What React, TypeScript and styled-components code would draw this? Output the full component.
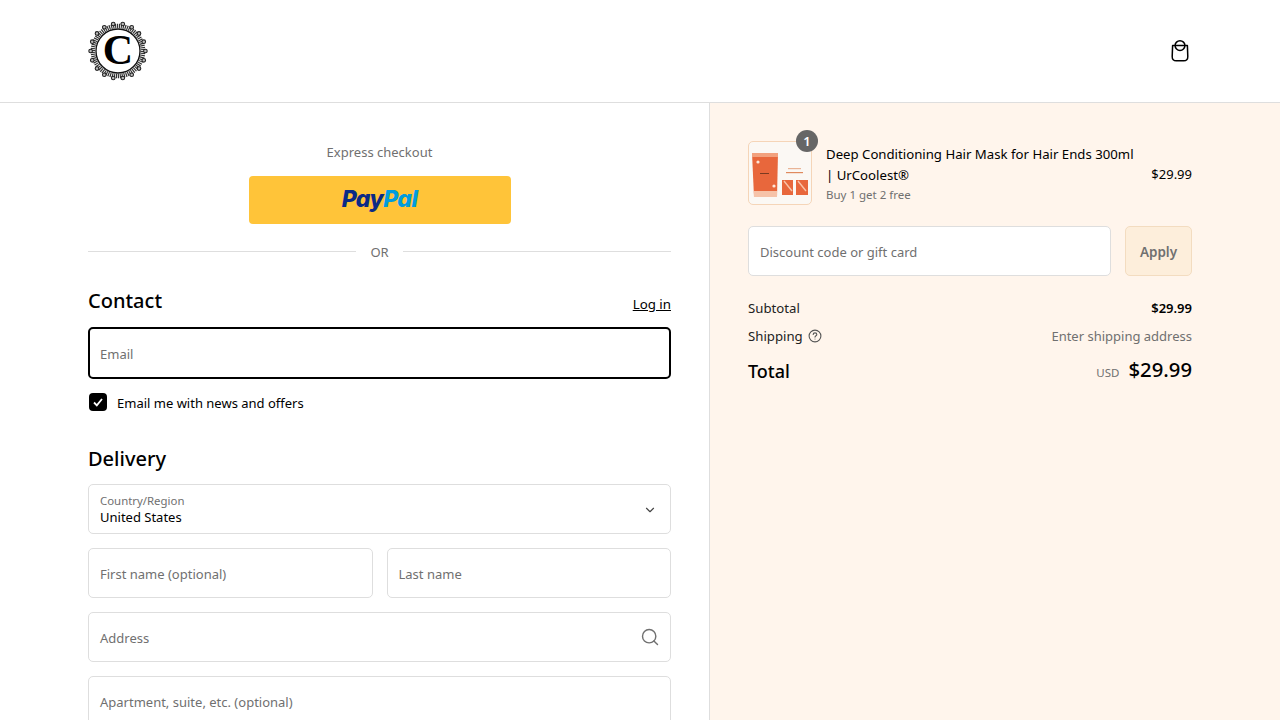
import React from 'react'
import styled, { createGlobalStyle } from 'styled-components'
import { ChevronDown, Search } from 'lucide-react'

const GlobalStyle = createGlobalStyle`
  html, body {
    height: 100%;
    margin: 0;
    overflow: hidden;
  }
  body {
    background: #fff;
    color: #000;
    font-family: "Noto Sans", "Open Sans", sans-serif;
    font-size: 13px;
  }
  * {
    box-sizing: border-box;
  }
`

const Header = styled.header`
  align-items: center;
  border-bottom: 1px solid #dedede;
  display: flex;
  height: 103px;
  justify-content: space-between;
  padding: 0 88px;
`

const CartLink = styled.a`
  color: #000;
  display: flex;
`

const Main = styled.div`
  display: grid;
  grid-template-columns: 710px 1fr;
  height: 617px;
  overflow: hidden;
`

const CheckoutColumn = styled.main`
  border-right: 1px solid #dedede;
  padding: 38px 38px 0 88px;
`

const ExpressLabel = styled.div`
  color: #707070;
  font-size: 13px;
  line-height: 22px;
  text-align: center;
`

const PayPalButton = styled.button`
  align-items: center;
  background: #ffc439;
  border: 0;
  border-radius: 4px;
  display: flex;
  font-family: Inter, "Liberation Sans", sans-serif;
  font-size: 23px;
  font-style: italic;
  font-weight: 800;
  height: 48px;
  justify-content: center;
  letter-spacing: -0.6px;
  margin: 13px auto 0;
  padding: 0 0 3px;
  width: 262px;
`

const PayPart = styled.span<{ $light?: boolean }>`
  color: ${({ $light }) => ($light ? '#009cde' : '#0b2a86')};
`

const Divider = styled.div`
  align-items: center;
  color: #707070;
  display: flex;
  font-size: 13px;
  gap: 14px;
  line-height: 20px;
  margin-top: 18px;

  &::before,
  &::after {
    background: #dedede;
    content: '';
    flex: 1;
    height: 1px;
    margin-top: -1px;
  }
`

const SectionHead = styled.div`
  align-items: flex-end;
  display: flex;
  justify-content: space-between;
`

const SectionTitle = styled.h2<{ $top: number }>`
  font-size: 20px;
  font-weight: 500;
  line-height: 28px;
  margin: ${({ $top }) => $top}px 0 0;
`

const LogIn = styled.a`
  color: #000;
  font-size: 13.3px;
  line-height: 20px;
  margin-bottom: 1px;
  text-decoration: underline;
`

const Field = styled.div<{ $focused?: boolean; $top?: number }>`
  align-items: center;
  background: #fff;
  border: ${({ $focused }) => ($focused ? '2px solid #000' : '1px solid #dedede')};
  border-radius: 5px;
  color: #707070;
  display: flex;
  flex: 1;
  font-size: 13px;
  height: ${({ $focused }) => ($focused ? '52px' : '50px')};
  justify-content: space-between;
  margin-top: ${({ $top }) => $top ?? 0}px;
  padding: 1px ${({ $focused }) => ($focused ? '10px' : '11px')} 0;
`

const SelectText = styled.div`
  display: flex;
  flex-direction: column;
  margin-top: -1px;
`

const SelectLabel = styled.span`
  color: #707070;
  font-size: 11.4px;
  line-height: 16px;
`

const SelectValue = styled.span`
  color: #000;
  font-size: 13px;
  line-height: 17px;
`

const SelectChevron = styled(ChevronDown)`
  margin-right: 2px;
  margin-top: 1px;
`

const SearchGlyph = styled(Search)`
  margin-right: -1px;
  margin-top: -1px;
`

const FieldRow = styled.div`
  display: flex;
  gap: 14px;
  margin-top: 14px;
`

const CheckRow = styled.label`
  align-items: center;
  display: flex;
  gap: 10px;
  line-height: 20px;
  margin-top: 12px;
  padding-left: 1px;
`

const CheckText = styled.span`
  padding-top: 2px;
`

const CheckBox = styled.span`
  align-items: center;
  background: #000;
  border-radius: 4px;
  color: #fff;
  display: flex;
  height: 18px;
  justify-content: center;
  width: 18px;
`

const SummaryColumn = styled.aside`
  background: #fff5ec;
  padding: 38px 88px 0 38px;
`

const Product = styled.div`
  align-items: center;
  display: flex;
  gap: 14px;
`

const Thumb = styled.div`
  background: #fbf8f4;
  border: 1px solid #f5d5b8;
  border-radius: 5px;
  flex: none;
  height: 64px;
  position: relative;
  width: 64px;
`

const Badge = styled.span`
  align-items: center;
  background: #666;
  border-radius: 50%;
  color: #fff;
  display: flex;
  font-size: 13px;
  font-weight: 600;
  height: 22px;
  justify-content: center;
  position: absolute;
  right: -7px;
  top: -12px;
  width: 22px;
`

const ProductInfo = styled.div`
  flex: 1;
`

const ProductName = styled.div`
  font-size: 13.2px;
  line-height: 21px;
  padding-top: 1px;
`

const ProductNote = styled.div`
  color: #707070;
  font-size: 11.5px;
  line-height: 18px;
`

const Price = styled.span`
  font-size: 13px;
  padding-top: 2px;
`

const DiscountRow = styled.div`
  display: flex;
  gap: 14px;
  margin-top: 21px;
`

const ApplyButton = styled.button`
  background: #fdeedb;
  border: 1px solid #f3dcc0;
  border-radius: 5px;
  color: #707070;
  font-family: inherit;
  font-size: 13.5px;
  font-weight: 600;
  height: 50px;
  padding: 2px 0 0;
  width: 67px;
`

const Totals = styled.div`
  margin-top: 22px;
`

const TotalRow = styled.div<{ $top?: number }>`
  align-items: center;
  display: flex;
  justify-content: space-between;
  line-height: 20px;
  margin-top: ${({ $top }) => $top ?? 0}px;
`

const RowLabel = styled.span`
  align-items: center;
  color: #222;
  display: flex;
  font-size: 13.2px;
  gap: 5px;
`

const Strong = styled.span`
  font-weight: 600;
`

const Muted = styled.span`
  color: #707070;
`

const GrandLabel = styled.span`
  font-size: 18px;
  font-weight: 500;
  line-height: 28px;
`

const GrandValue = styled.span`
  align-items: baseline;
  display: flex;
  font-size: 20.3px;
  font-weight: 500;
  gap: 9px;
  line-height: 28px;
`

const Currency = styled.span`
  color: #707070;
  font-size: 11.5px;
  font-weight: 400;
`

const LOOP_ANGLES = Array.from({ length: 18 }, (_, i) => (i * Math.PI) / 9)

const Logo = () => (
  <svg width="60" height="60" viewBox="0 0 60 60">
    <circle cx="30" cy="30" r="25" fill="none" stroke="#333" strokeWidth="4.6" strokeDasharray="1.2 .8" />
    {LOOP_ANGLES.map((a) => (
      <circle
        key={a}
        cx={30 + 27.4 * Math.cos(a)}
        cy={30 + 27.4 * Math.sin(a)}
        r="1.8"
        fill="#bbb"
        stroke="#222"
        strokeWidth="1.1"
      />
    ))}
    <circle cx="30" cy="30" r="22" fill="#fff" stroke="#111" strokeWidth="1.3" />
    <text
      x="30"
      y="43"
      fill="#000"
      fontFamily="Liberation Serif, serif"
      fontSize="42"
      fontWeight="700"
      textAnchor="middle"
    >
      C
    </text>
  </svg>
)

const BagIcon = () => (
  <svg width="24" height="24" viewBox="0 0 24 24" fill="none" stroke="currentColor" strokeWidth="1.5">
    <path d="M4.6 6.6h14.8l.4 11c.1 2.6-1.5 4.2-4 4.2H8.2c-2.5 0-4.1-1.6-4-4.2z" strokeLinejoin="round" />
    <circle cx="12" cy="6.6" r="4.9" />
  </svg>
)

const HelpIcon = () => (
  <svg width="14" height="14" viewBox="0 0 14 14" fill="none" stroke="#555" strokeWidth="1.1">
    <circle cx="7" cy="7" r="5.9" />
    <path d="M5.2 5.5c0-1 .8-1.6 1.8-1.6s1.8.6 1.8 1.5c0 1.3-1.8 1.3-1.8 2.7" strokeLinecap="round" />
    <circle cx="7" cy="10" r=".5" fill="#555" stroke="none" />
  </svg>
)

const ProductArt = () => (
  <svg width="62" height="62" viewBox="0 0 62 62">
    <path d="M3 11h26l-1 44H5z" fill="#e8673c" />
    <path d="M3 11h26v4H3z" fill="#f2a17e" />
    <path d="M5 49h23v6H5z" fill="#f6c3a9" />
    <rect x="11" y="31" width="9" height="1" fill="#7a3a20" />
    <circle cx="9" cy="20" r="1.6" fill="#fde5d8" />
    <circle cx="25" cy="44" r="1.6" fill="#fde5d8" />
    <rect x="39" y="26" width="13" height="1.2" fill="#e9b496" />
    <rect x="37" y="30" width="17" height="1.2" fill="#e08a5e" />
    <rect x="33" y="38" width="11" height="15" fill="#e8673c" />
    <rect x="47" y="38" width="12" height="15" fill="#e8673c" />
    <path d="M35 39l8 10M49 39l8 10" stroke="#f9c3a8" strokeWidth="1.4" />
  </svg>
)

const App: React.FC = () => (
  <>
    <GlobalStyle />
    <Header>
      <Logo />
      <CartLink>
        <BagIcon />
      </CartLink>
    </Header>
    <Main>
      <CheckoutColumn>
        <ExpressLabel>Express checkout</ExpressLabel>
        <PayPalButton>
          <PayPart>Pay</PayPart>
          <PayPart $light>Pal</PayPart>
        </PayPalButton>
        <Divider>OR</Divider>
        <SectionHead>
          <SectionTitle $top={25}>Contact</SectionTitle>
          <LogIn>Log in</LogIn>
        </SectionHead>
        <Field $focused $top={12}>
          Email
        </Field>
        <CheckRow>
          <CheckBox>
            <svg width="12" height="12" viewBox="0 0 12 12" fill="none" stroke="currentColor" strokeWidth="1.8">
              <path d="M2 6.5l2.8 2.8L10 3" />
            </svg>
          </CheckBox>
          <CheckText>Email me with news and offers</CheckText>
        </CheckRow>
        <SectionTitle $top={32}>Delivery</SectionTitle>
        <Field $top={11}>
          <SelectText>
            <SelectLabel>Country/Region</SelectLabel>
            <SelectValue>United States</SelectValue>
          </SelectText>
          <SelectChevron size={14} color="#444" />
        </Field>
        <FieldRow>
          <Field>First name (optional)</Field>
          <Field>Last name</Field>
        </FieldRow>
        <Field $top={14}>
          Address
          <SearchGlyph size={20} color="#707070" strokeWidth={1.7} />
        </Field>
        <Field $top={14}>Apartment, suite, etc. (optional)</Field>
      </CheckoutColumn>
      <SummaryColumn>
        <Product>
          <Thumb>
            <ProductArt />
            <Badge>1</Badge>
          </Thumb>
          <ProductInfo>
            <ProductName>Deep Conditioning Hair Mask for Hair Ends 300ml | UrCoolest®</ProductName>
            <ProductNote>Buy 1 get 2 free</ProductNote>
          </ProductInfo>
          <Price>$29.99</Price>
        </Product>
        <DiscountRow>
          <Field>Discount code or gift card</Field>
          <ApplyButton>Apply</ApplyButton>
        </DiscountRow>
        <Totals>
          <TotalRow>
            <RowLabel>Subtotal</RowLabel>
            <Strong>$29.99</Strong>
          </TotalRow>
          <TotalRow $top={8}>
            <RowLabel>
              Shipping
              <HelpIcon />
            </RowLabel>
            <Muted>Enter shipping address</Muted>
          </TotalRow>
          <TotalRow $top={9}>
            <GrandLabel>Total</GrandLabel>
            <GrandValue>
              <Currency>USD</Currency>
              $29.99
            </GrandValue>
          </TotalRow>
        </Totals>
      </SummaryColumn>
    </Main>
  </>
)

export default App
